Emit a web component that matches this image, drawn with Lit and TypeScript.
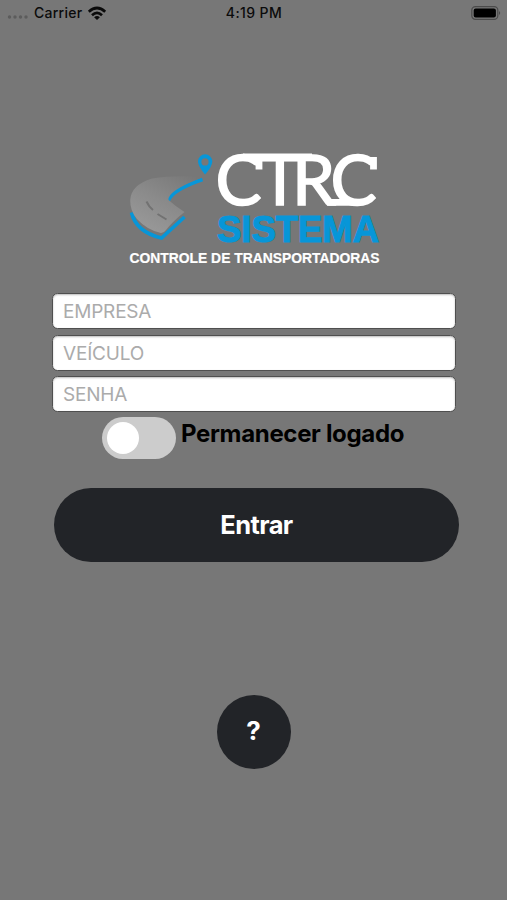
import { LitElement, html, css, svg } from "lit";
import { customElement, property, state } from "lit/decorators.js";
import { classMap } from "lit/directives/class-map.js";

@customElement("status-bar")
class StatusBar extends LitElement {
  static styles = css`
    :host {
      display: grid;
      grid-template-columns: 1fr auto 1fr;
      align-items: center;
      height: 26px;
      padding: 0 6px 0 7px;
      font: 500 14px/26px Inter, "Liberation Sans", sans-serif;
      color: #0b0b0b;
    }
    .left { display: flex; align-items: center; letter-spacing: 0.25px; }
    .dots { width: 21px; height: 4px; margin: 7px 6px 0 0; }
    .wifi { width: 20px; height: 15px; margin-left: 5px; }
    .battery { width: 30px; height: 16px; justify-self: end; }
    .time { letter-spacing: 0.4px; }
  `;
  render() {
    return html`
      <div class="left">
        <svg class="dots" viewBox="0 0 21 4" fill="#5c5c5c">
          ${[2.5, 8, 13.5, 19].map((x) => svg`<circle cx=${x} cy="2" r="1.7" />`)}
        </svg>
        <span>Carrier</span>
        <svg class="wifi" viewBox="0 0 20 15" fill="none" stroke="#0a0a0a" stroke-width="2.7">
          <path d="M1.8 5.7Q10-1.7 18.2 5.7M5 9.2Q10 4.6 15 9.2" />
          <path d="M7.1 11.2Q10 8.8 12.9 11.2L10 14Z" fill="#0a0a0a" stroke="none" />
        </svg>
      </div>
      <span class="time">4:19 PM</span>
      <svg class="battery" viewBox="0 0 30 16">
        <rect x="0.8" y="1.7" width="26" height="12.6" rx="3.6" fill="none" stroke="#4b4b4b" stroke-width="1.2" />
        <rect x="2.7" y="3.5" width="22.2" height="9" rx="2" />
        <path d="M28 6Q30.4 8 28 10Z" fill="#4b4b4b" />
      </svg>
    `;
  }
}

@customElement("brand-logo")
class BrandLogo extends LitElement {
  static styles = css`
    :host { display: block; width: 260px; height: 120px; }
    svg { display: block; width: 100%; height: 100%; overflow: visible; }
    text { font-family: "Liberation Sans", Arial, sans-serif; }
    .name { font-family: Lato, "Liberation Sans", sans-serif; font-size: 69px; fill: #fff; stroke: #fff; stroke-width: 1.6px; }
    .join { fill: none; stroke: #fff; stroke-width: 6.8px; }
    .system { font-size: 37px; font-weight: 700; fill: #0796d8; stroke: #0796d8; stroke-width: 1.2px; }
    .tagline { font-size: 13.8px; font-weight: 700; fill: #fff; stroke: #fff; stroke-width: 0.2px; }
    .edge { fill: none; stroke: #0796d8; stroke-width: 3.6px; }
  `;
  render() {
    return html`
      <svg viewBox="125 148 260 120">
        <defs>
          <linearGradient id="road" x1="0.2" y1="1" x2="0.9" y2="0">
            <stop offset="0" stop-color="#9a9a9a" />
            <stop offset="0.5" stop-color="#8a8a8a" />
            <stop offset="1" stop-color="#777" />
          </linearGradient>
        </defs>
        <path class="edge" d="M131.500 212.500Q136 232 161.500 238L184.500 217" />
        <path class="edge" d="M168.500 200.500Q172 190 202.500 179.500" />
        <path d="M203 177Q174 175 152 178.500Q131 185 130.200 200Q130 211 137 219Q147 230 161 233Q164 233 166 230Q173 221 184.500 212Q175 206 168.500 200Q167 191 203 177Z" fill="url(#road)" />
        <path d="M146.500 201.500Q149 207 153 210M157.500 214L166.500 219.500" fill="none" stroke="#727272" stroke-width="2" />
        <path fill-rule="evenodd" d="M205 174.500Q198 166 198 161.500A7 7 0 0 1 212.300 161.500Q212 167 205 174.500ZM205 158.300A3.600 3.600 0 1 0 205 165.500A3.600 3.600 0 1 0 205 158.300Z" fill="#0796d8" />
        <text class="name" x="215.500 259.500 292 330.500" y="205">CTRC</text>
        <path class="join" d="M243 157H312M259 156V169.500M373.500 157V169.500M327 202.300H358" />
        <text class="system" x="217" y="241.500" textLength="162" lengthAdjust="spacingAndGlyphs">SISTEMA</text>
        <text class="tagline" x="129.500" y="263.300" textLength="250" lengthAdjust="spacingAndGlyphs">CONTROLE DE TRANSPORTADORAS</text>
      </svg>
    `;
  }
}

@customElement("toggle-switch")
class ToggleSwitch extends LitElement {
  @property({ type: Boolean }) checked = false;
  static styles = css`
    :host { display: block; }
    .track {
      display: flex;
      box-sizing: border-box;
      width: 74px;
      height: 42px;
      padding: 5px;
      border: 0;
      border-radius: 21px;
      background: #ccc;
    }
    .on { justify-content: flex-end; background: #0796d8; }
    .knob { width: 32px; height: 32px; border-radius: 50%; background: #fff; }
  `;
  render() {
    return html`<button
      class=${classMap({ track: true, on: this.checked })}
      role="switch"
      aria-checked=${this.checked}
      @click=${() => (this.checked = !this.checked)}
    ><span class="knob"></span></button>`;
  }
}

@customElement("app-root")
class AppRoot extends LitElement {
  @state() fields = ["EMPRESA", "VEÍCULO", "SENHA"];
  static styles = css`
    :host {
      display: flex;
      flex-direction: column;
      height: 900px;
      background: #777;
      font-family: Inter, "Liberation Sans", sans-serif;
      overflow: hidden;
    }
    .logo { margin: 122px 0 0 125px; }
    .fields { display: grid; gap: 5.5px; margin: 25px 51px 0 52px; }
    .field {
      box-sizing: border-box;
      width: 100%;
      height: 36px;
      padding: 1px 10px 0;
      border: 1px solid #4f4f4f;
      border-radius: 5.5px;
      outline: 0;
      background: #fff;
      box-shadow: inset 0 1px 2px #bbb;
      font: 400 19px/33px Inter, "Liberation Sans", sans-serif;
      letter-spacing: -0.2px;
    }
    .field::placeholder { color: #ababab; opacity: 1; }
    .remember { display: flex; gap: 5px; margin: 5px 0 0 102px; height: 42px; }
    .label { font-size: 24px; font-weight: 700; line-height: 33px; letter-spacing: -0.33px; color: #000; }
    .enter {
      height: 74px;
      margin: 29px 48px 0 54px;
      border: 0;
      border-radius: 37px;
      background: #222428;
      color: #fff;
      font: 700 25.5px/72px Inter, "Liberation Sans", sans-serif;
      letter-spacing: -0.6px;
    }
    .help {
      width: 74px;
      height: 74px;
      margin: 133px 0 0 217px;
      padding: 0 1px 2px 0;
      border: 0;
      border-radius: 50%;
      background: #222428;
      color: #fff;
      font: 700 26px/72px Inter, "Liberation Sans", sans-serif;
    }
  `;
  render() {
    return html`
      <status-bar></status-bar>
      <brand-logo class="logo"></brand-logo>
      <div class="fields">
        ${this.fields.map((name) => html`<input class="field" placeholder=${name} />`)}
      </div>
      <div class="remember">
        <toggle-switch></toggle-switch>
        <span class="label">Permanecer logado</span>
      </div>
      <button class="enter">Entrar</button>
      <button class="help">?</button>
    `;
  }
}
